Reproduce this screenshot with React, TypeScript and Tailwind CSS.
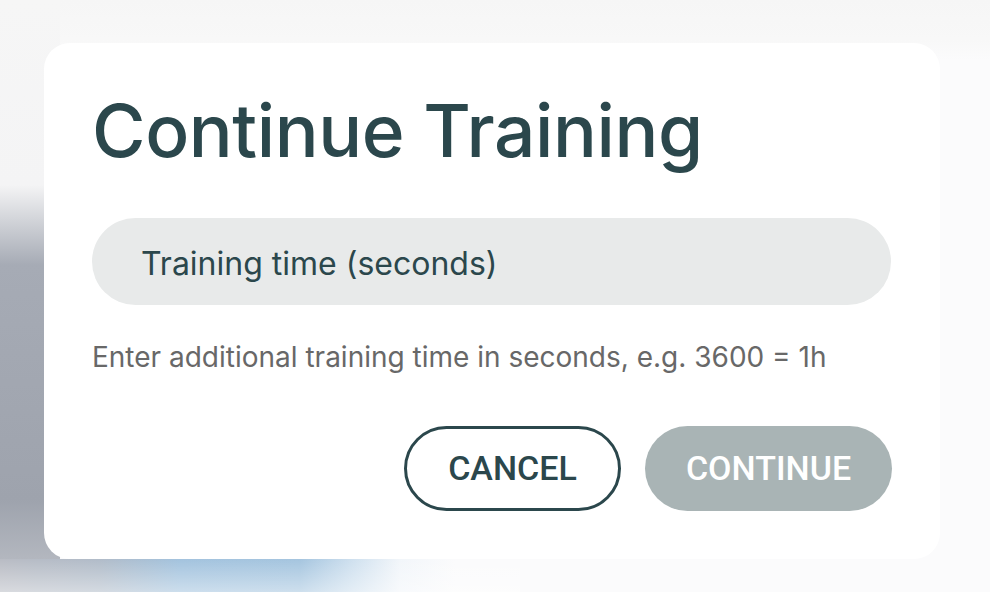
import React from "react";

const ink = "text-[#2b474c]";
const buttonFont = { fontFamily: "Roboto, 'Liberation Sans', sans-serif" };

// Blurred page content sitting behind the modal
const Backdrop: React.FC = () => (
  <div className="absolute inset-0 bg-[#fbfbfc]">
    <div className="absolute left-0 top-0 w-full h-[60px] bg-[linear-gradient(to_bottom,#f6f6f6_0px,#f8f8f8_40px,#fbfbfc_60px)]" />
    <div className="absolute left-0 top-0 w-[60px] h-full bg-[linear-gradient(to_bottom,#f6f6f6_0px,#f4f4f5_185px,#a6abb5_265px,#9ea3ad_500px,#b3b7bf_559px)]" />
    <div className="absolute left-0 top-[559px] w-[520px] h-[33px] bg-[linear-gradient(to_right,#b9bcc4_0px,#b1bcc9_100px,#a3c3de_180px,#a5c5df_300px,#cddfee_350px,#f2f6fa_400px,#fbfbfc_455px)]" />
    <div className="absolute left-0 top-[559px] w-[520px] h-[33px] bg-[linear-gradient(to_bottom,rgba(255,255,255,0)_0px,rgba(255,255,255,0.45)_33px)]" />
  </div>
);

const App: React.FC = () => {
  return (
    <div
      className="relative w-[990px] h-[592px] overflow-hidden"
      style={{ fontFamily: "Inter, 'Noto Sans', sans-serif" }}
    >
      <Backdrop />
      <div className="relative pl-[44px] pt-[43px]">
        <div className="w-[896px] h-[516px] bg-white rounded-[26px] px-[48px] pt-[46px] flex flex-col">
          <h1 className={`text-[73px] leading-[84px] font-medium tracking-[-0.4px] ${ink}`}>
            Continue Training
          </h1>

          <div className="mt-[45px] h-[87px] w-[799px] rounded-full bg-[#e8eaea] flex items-center pl-[49px]">
            <span className={`text-[32px] leading-[40px] pt-[4px] ${ink}`}>Training time (seconds)</span>
          </div>

          <p className="mt-[35px] text-[28px] leading-[34px] text-[#686868]">
            Enter additional training time in seconds, e.g. 3600 = 1h
          </p>

          <div className="mt-auto mb-[48px] flex justify-end gap-[24px]">
            <button
              className={`h-[85px] w-[217px] rounded-full border-[3px] border-[#2b474c] bg-white text-[34px] font-medium ${ink}`}
              style={buttonFont}
            >
              CANCEL
            </button>
            <button
              className="h-[85px] w-[247px] rounded-full bg-[#a9b4b5] text-[34px] font-medium text-white"
              style={buttonFont}
            >
              CONTINUE
            </button>
          </div>
        </div>
      </div>
    </div>
  );
};

export default App;
